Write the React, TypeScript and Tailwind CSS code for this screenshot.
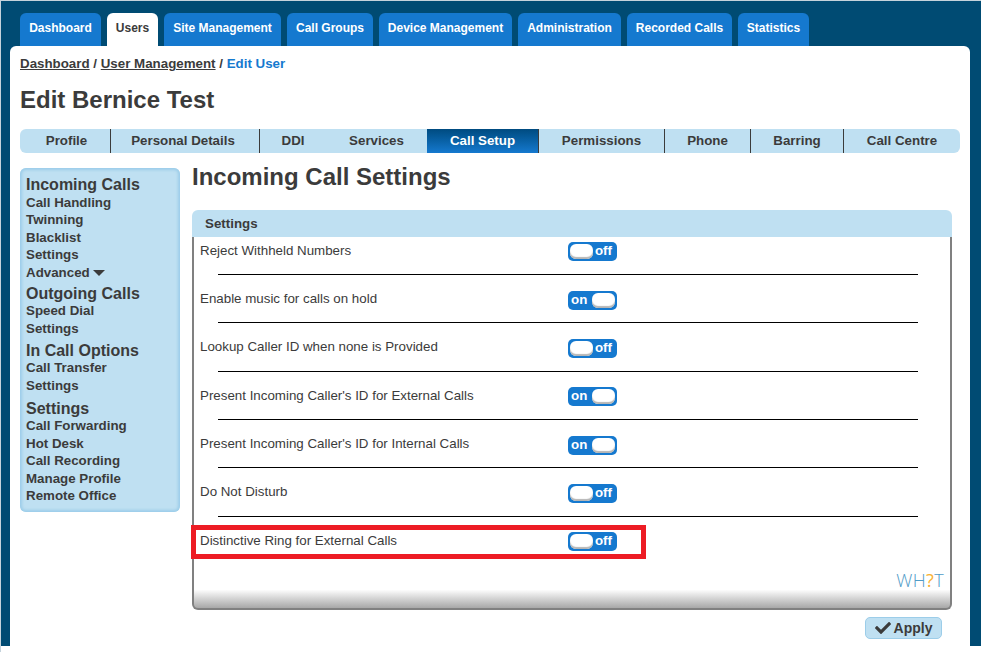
import { FaCheck } from 'react-icons/fa'

const topTabs = [
  { label: 'Dashboard', width: 'w-[81px]' },
  { label: 'Users', width: 'w-[51px]', active: true },
  { label: 'Site Management', width: 'w-[117px]' },
  { label: 'Call Groups', width: 'w-[86px]' },
  { label: 'Device Management', width: 'w-[133px]' },
  { label: 'Administration', width: 'w-[103px]' },
  { label: 'Recorded Calls', width: 'w-[105px]' },
  { label: 'Statistics', width: 'w-[71px]' },
]

const subTabs = [
  { label: 'Profile', width: 'w-[91px] pl-[3px]', border: true },
  { label: 'Personal Details', width: 'w-[149px] pr-[4px]', border: true },
  { label: 'DDI', width: 'w-[66px]' },
  { label: 'Services', width: 'w-[101px]' },
  { label: 'Call Setup', width: 'w-[112px]', active: true, border: true },
  { label: 'Permissions', width: 'w-[126px]', border: true },
  { label: 'Phone', width: 'w-[86px]', border: true },
  { label: 'Barring', width: 'w-[93px]', border: true },
  { label: 'Call Centre', width: 'w-[116px]' },
]

const menu = [
  { title: 'Incoming Calls', gap: 'mb-[2px]', items: ['Call Handling', 'Twinning', 'Blacklist', 'Settings', 'Advanced'] },
  { title: 'Outgoing Calls', gap: 'mb-[3px]', items: ['Speed Dial', 'Settings'] },
  { title: 'In Call Options', gap: 'mb-[4px]', items: ['Call Transfer', 'Settings'] },
  { title: 'Settings', gap: '', items: ['Call Forwarding', 'Hot Desk', 'Call Recording', 'Manage Profile', 'Remote Office'] },
]

const settings = [
  { label: 'Reject Withheld Numbers', on: false },
  { label: 'Enable music for calls on hold', on: true },
  { label: 'Lookup Caller ID when none is Provided', on: false },
  { label: "Present Incoming Caller's ID for External Calls", on: true },
  { label: "Present Incoming Caller's ID for Internal Calls", on: true },
  { label: 'Do Not Disturb', on: false },
  { label: 'Distinctive Ring for External Calls', on: false },
]

function Toggle({ on }: { on: boolean }) {
  return (
    <div className="flex h-[19px] w-[49px] shrink-0 items-center justify-between rounded-[5px] bg-[#1579cf] px-[2px] text-[13.33px] font-bold leading-none text-white">
      {on ? (
        <>
          <span className="mb-[2px] ml-[1px]">on</span>
          <span className="h-[15px] w-[23px] rounded-[6px] bg-white shadow-[inset_0_-2px_1px_#b5b5b5]" />
        </>
      ) : (
        <>
          <span className="h-[15px] w-[23px] rounded-[6px] bg-white shadow-[inset_0_-2px_1px_#b5b5b5]" />
          <span className="mb-[2px] mr-[3px]">off</span>
        </>
      )}
    </div>
  )
}

export default function App() {
  return (
    <div className="h-[652px] w-[990px] overflow-hidden border-l border-l-[#c5d3dc] bg-white font-['Liberation_Sans',Arial,sans-serif] text-[#3b3b3b]">
      <div className="flex h-[646px] w-[980px] flex-col border-t border-t-[#c5d3dc] bg-[#004b73] pl-[9px] pr-[11px] pt-[12px]">
        <div className="flex gap-[6px] pl-[10px]">
          {topTabs.map((tab) => (
            <div
              key={tab.label}
              className={`flex h-[33px] items-center justify-center rounded-t-[6px] pb-[3px] text-[12px] font-bold ${tab.width} ${
                tab.active ? 'bg-white text-[#3b3b3b]' : 'bg-[#1579cf] text-white'
              }`}
            >
              {tab.label}
            </div>
          ))}
        </div>

        <div className="flex min-h-0 flex-1 flex-col rounded-t-[6px] bg-white px-[10px]">
          <div className="mt-[10px] h-[16px] text-[13.33px] font-bold leading-[16px]">
            <span className="underline">Dashboard</span> / <span className="underline">User Management</span> /{' '}
            <span className="text-[#1579cf]">Edit User</span>
          </div>
          <h1 className="mt-[14px] h-[28px] text-[24px] font-bold leading-[28px]">Edit Bernice Test</h1>

          <div className="mt-[15px] flex h-[24px] overflow-hidden rounded-[6px] bg-[#bfe0f2]">
            {subTabs.map((tab) => (
              <div
                key={tab.label}
                className={`flex items-center justify-center text-[13.33px] font-bold ${tab.width} ${
                  tab.border ? 'border-r border-r-[#3b3b3b]' : ''
                } ${tab.active ? 'bg-gradient-to-b from-[#004b80] to-[#1579cf] text-white' : ''}`}
              >
                {tab.label}
              </div>
            ))}
          </div>

          <div className="mt-[15px] flex min-h-0 flex-1 gap-[12px]">
            <div className="h-[344px] w-[160px] shrink-0 rounded-[6px] bg-[#bfe0f2] px-[6px] pt-[7px] shadow-[inset_0_0_3px_2px_#9ccde9]">
              {menu.map((group) => (
                <div key={group.title} className={group.gap}>
                  <div className="h-[19px] text-[16px] font-bold leading-[19px]">{group.title}</div>
                  {group.items.map((item) => (
                    <div key={item} className="flex h-[17.5px] items-center gap-[3px] text-[13.33px] font-bold">
                      {item}
                      {item === 'Advanced' && (
                        <span className="h-0 w-0 border-x-[6px] border-t-[6px] border-x-transparent border-t-[#3b3b3b]" />
                      )}
                    </div>
                  ))}
                </div>
              ))}
            </div>

            <div className="flex w-[760px] flex-col">
              <h2 className="mt-[-5px] h-[28px] text-[24px] font-bold leading-[28px]">Incoming Call Settings</h2>

              <div className="mt-[19px] flex h-[27px] items-center rounded-t-[6px] bg-[#bfe0f2] pl-[13px] text-[13.33px] font-bold">
                Settings
              </div>
              <div className="relative flex h-[373px] flex-col rounded-b-[6px] border-x-2 border-b-2 border-[#808080] bg-gradient-to-b from-white from-[95%] to-[#a8a8a8] pl-[6px] pt-[5.4px]">
                {settings.map((row, index) => (
                  <div key={row.label} className="h-[48.33px]">
                    <div className="flex h-[19px] items-center text-[13.33px]">
                      <span className="w-[368px] pb-[2.4px]">{row.label}</span>
                      <Toggle on={row.on} />
                    </div>
                    {index < settings.length - 1 && <div className="ml-[18px] mt-[12.7px] h-px w-[700px] bg-black" />}
                  </div>
                ))}
                <div className="absolute left-[-3px] top-[288px] h-[34px] w-[455px] border-[5px] border-[#ed1c24]" />
                <div className="absolute right-[6px] top-[333px] font-['Open_Sans',sans-serif] text-[18px] font-light leading-[20px] tracking-[0.4px] text-[#4f9bc7]">
                  WH<span className="font-normal text-[#f9b233]">?</span>T
                </div>
              </div>

              <div className="mt-[7px] flex justify-end pr-[10px]">
                <div className="flex h-[22px] w-[77px] items-center justify-center gap-[3px] rounded-[5px] border border-[#9ccde9] bg-[#bfe0f2] text-[14px] font-bold">
                  <FaCheck size={16} />
                  Apply
                </div>
              </div>
            </div>
          </div>
        </div>
      </div>
    </div>
  )
}
